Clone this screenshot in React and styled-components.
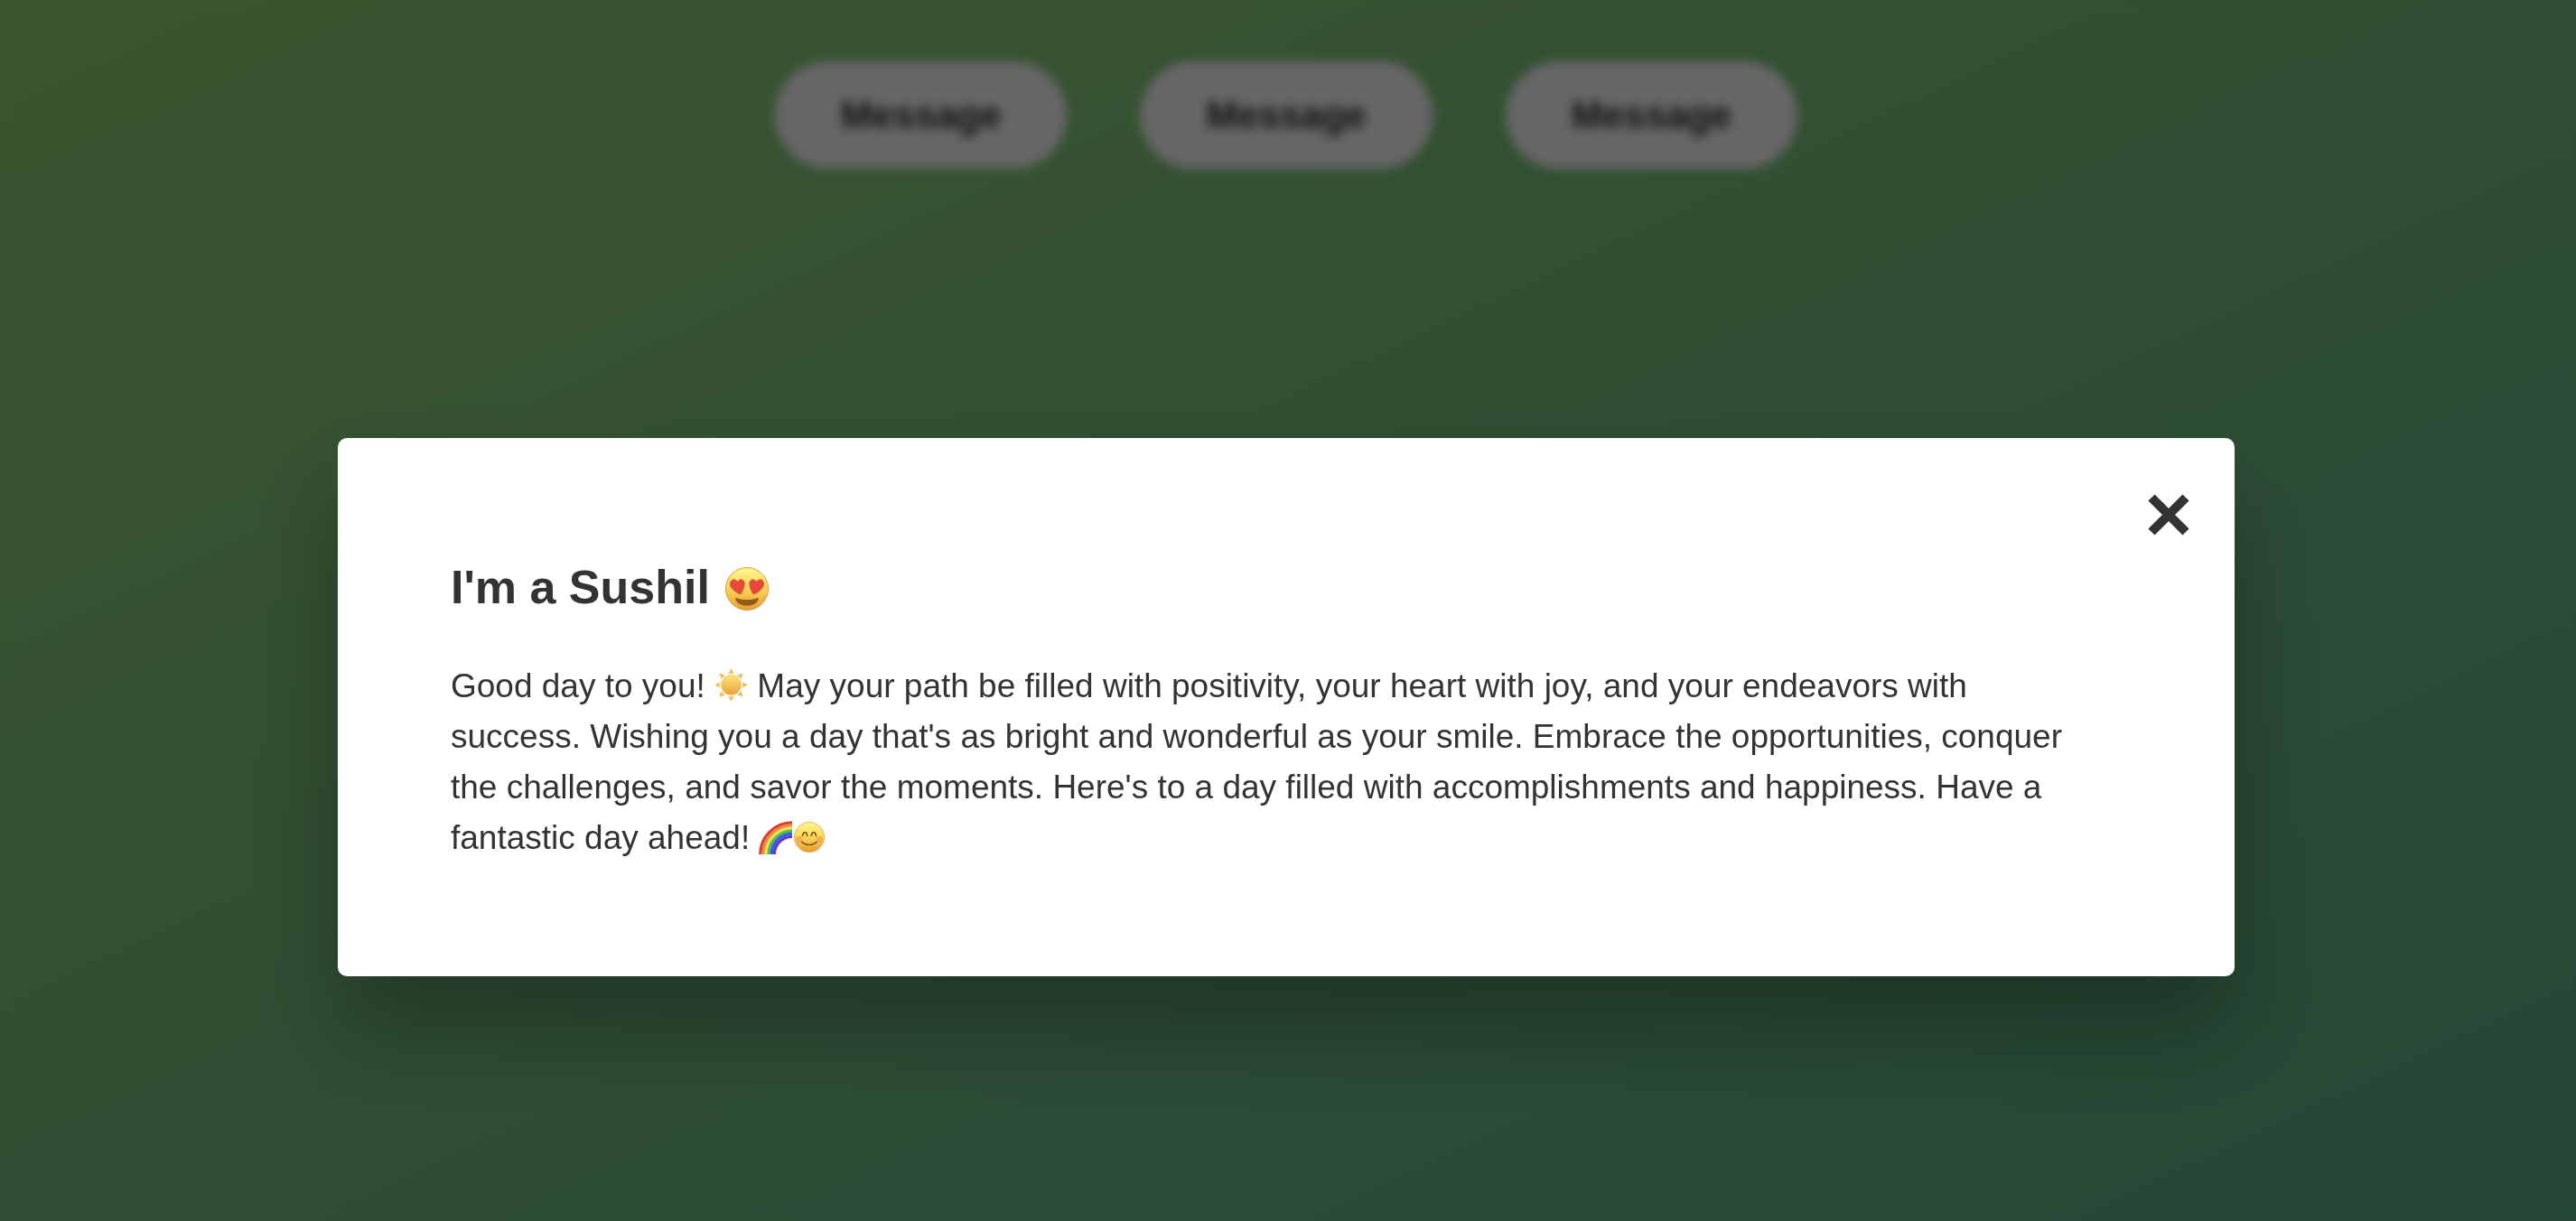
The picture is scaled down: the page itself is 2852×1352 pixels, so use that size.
import React, { useState } from "react";
import styled, { createGlobalStyle } from "styled-components";

const GlobalStyle = createGlobalStyle`
  *, *::before, *::after { box-sizing: border-box; margin: 0; padding: 0; }
  body {
    min-height: 100vh;
    color: #333;
    font-family: "Liberation Sans", Arial, sans-serif;
    line-height: 1.5;
    background: linear-gradient(to top left, #5bb28a, #95d578) fixed;
  }
`;

const Toolbar = styled.main`
  display: flex;
  justify-content: center;
  gap: 81px;
  padding: 68px 4px 68px 0;
`;

const OpenButton = styled.button`
  padding: 36px 73px;
  border: none;
  border-radius: 208px;
  background: #fff;
  color: #333;
  font: bold 42px/47px "Liberation Sans", Arial, sans-serif;
  cursor: pointer;
`;

const Overlay = styled.div`
  position: fixed;
  inset: 0;
  display: flex;
  align-items: center;
  justify-content: center;
  padding: 214px 4px 0 0;
  background: rgba(0, 0, 0, 0.6);
  backdrop-filter: blur(6px);
`;

const Modal = styled.section`
  position: relative;
  width: 2100px;
  max-width: 94%;
  padding: 125px;
  border-radius: 10px;
  background: #fff;
  box-shadow: 0 60px 104px rgba(0, 0, 0, 0.3);
`;

const CloseButton = styled.button`
  position: absolute;
  top: 58px;
  right: 46px;
  display: flex;
  padding: 4px;
  border: none;
  background: none;
  color: #333;
  cursor: pointer;
`;

const Title = styled.h1`
  margin-bottom: 42px;
  font-size: 52px;
  line-height: 80px;
`;

const Message = styled.p`
  max-width: 1824px;
  font-size: 37px;
  line-height: 56px;
`;

const Emoji = styled.svg`
  display: inline-block;
  width: ${(p) => p.$size}px;
  height: ${(p) => p.$size}px;
  vertical-align: ${(p) => p.$drop}px;
`;

function FaceGradient({ id }) {
  return (
    <linearGradient id={id} x1="0" y1="0" x2="0" y2="1">
      <stop offset="0" stopColor="#fff68e" />
      <stop offset="0.5" stopColor="#fad556" />
      <stop offset="1" stopColor="#e69b36" />
    </linearGradient>
  );
}

const HEART = "M17 30C10 27.500 5 22.500 5.300 18C5.700 13 11.500 12 13.500 16.500C15.500 12 21.500 13 21.300 18.500C21 23 19 27 17 30z";

function HeartEyes() {
  return (
    <Emoji viewBox="-3 -2 52 52" $size={52} $drop={-10} role="img" aria-label="Heart eyes">
      <defs><FaceGradient id="heartFace" /></defs>
      <circle cx="24" cy="24" r="23.5" fill="url(#heartFace)" stroke="#dd9843" strokeWidth="1" />
      <path d="M12.500 34.200c7 2.600 16 2.600 23 0 1-.3 1.500.3 1.300 1.300-1.500 4.500-6.300 7.200-12.800 7.200s-11.300-2.700-12.800-7.200c-.2-1 .3-1.600 1.300-1.300z" fill="#8f5d17" />
      <g fill="#e9493c" stroke="#cc3d31" strokeWidth="0.6">
        <path d={HEART} />
        <path d={HEART} transform="translate(48 0) scale(-1 1)" />
      </g>
    </Emoji>
  );
}

function Sun() {
  const rays = [0, 45, 90, 135, 180, 225, 270, 315];
  return (
    <Emoji viewBox="-18.5 -18.5 37 37" $size={37} $drop={-5} role="img" aria-label="Sun">
      <defs>
        <linearGradient id="sunDisc" x1="0" y1="0" x2="0" y2="1">
          <stop offset="0" stopColor="#fce678" />
          <stop offset="1" stopColor="#e9a03b" />
        </linearGradient>
      </defs>
      <circle r="11" fill="url(#sunDisc)" stroke="#e5ab4a" strokeWidth="0.5" />
      {rays.map((a) => (
        <path key={a} d="M0-18 2.800-12.500Q0-13.500-2.800-12.500z" fill="#f2c04c" stroke="#e3ad58" strokeWidth="0.4" transform={`rotate(${a})`} />
      ))}
    </Emoji>
  );
}

function Rainbow() {
  const bands = ["#e03a35", "#ee8a35", "#f8dc55", "#52bd48", "#2b62e8", "#6a34cf"];
  return (
    <Emoji viewBox="0 0 37 37" $size={37} $drop={-6} role="img" aria-label="Rainbow">
      {bands.map((c, i) => (
        <circle key={c} cx="37" cy="37" r={35.2 - i * 3.1} fill="none" stroke={c} strokeWidth="3.3" />
      ))}
    </Emoji>
  );
}

function Smile() {
  return (
    <Emoji viewBox="-2 -1 37 37" $size={37} $drop={-6} role="img" aria-label="Smile">
      <defs><FaceGradient id="smileFace" /></defs>
      <circle cx="17" cy="17" r="16.6" fill="url(#smileFace)" stroke="#dd9843" strokeWidth="0.7" />
      <circle cx="5.5" cy="19.5" r="3.8" fill="#f08b45" opacity="0.45" />
      <circle cx="28.5" cy="19.5" r="3.8" fill="#f08b45" opacity="0.45" />
      <path d="M9.500 15.500c.6-5 4.700-5 5.300 0M19.200 15.500c.6-5 4.700-5 5.300 0M9 22c4 4.700 12 4.700 16 0" fill="none" stroke="#7d4d14" strokeWidth="1.5" strokeLinecap="round" />
    </Emoji>
  );
}

export default function App() {
  const [open, setOpen] = useState(true);
  const show = () => setOpen(true);
  return (
    <>
      <GlobalStyle />
      <Toolbar>
        <OpenButton onClick={show}>Message</OpenButton>
        <OpenButton onClick={show}>Message</OpenButton>
        <OpenButton onClick={show}>Message</OpenButton>
      </Toolbar>
      {open && (
        <Overlay>
          <Modal role="dialog" aria-modal="true" aria-labelledby="modal-title">
            <CloseButton aria-label="Close" onClick={() => setOpen(false)}>
              <svg width="46" height="46" viewBox="0 0 46 46" stroke="currentColor" strokeWidth="10">
                <path d="M4 4 42 42M42 4 4 42" />
              </svg>
            </CloseButton>
            <Title id="modal-title">I'm a Sushil <HeartEyes /></Title>
            <Message>
              Good day to you! <Sun /> May your path be filled with positivity, your heart with joy, and your endeavors with
              success. Wishing you a day that's as bright and wonderful as your smile. Embrace the opportunities, conquer
              the challenges, and savor the moments. Here's to a day filled with accomplishments and happiness. Have a
              fantastic day ahead! <Rainbow /><Smile />
            </Message>
          </Modal>
        </Overlay>
      )}
    </>
  );
}
